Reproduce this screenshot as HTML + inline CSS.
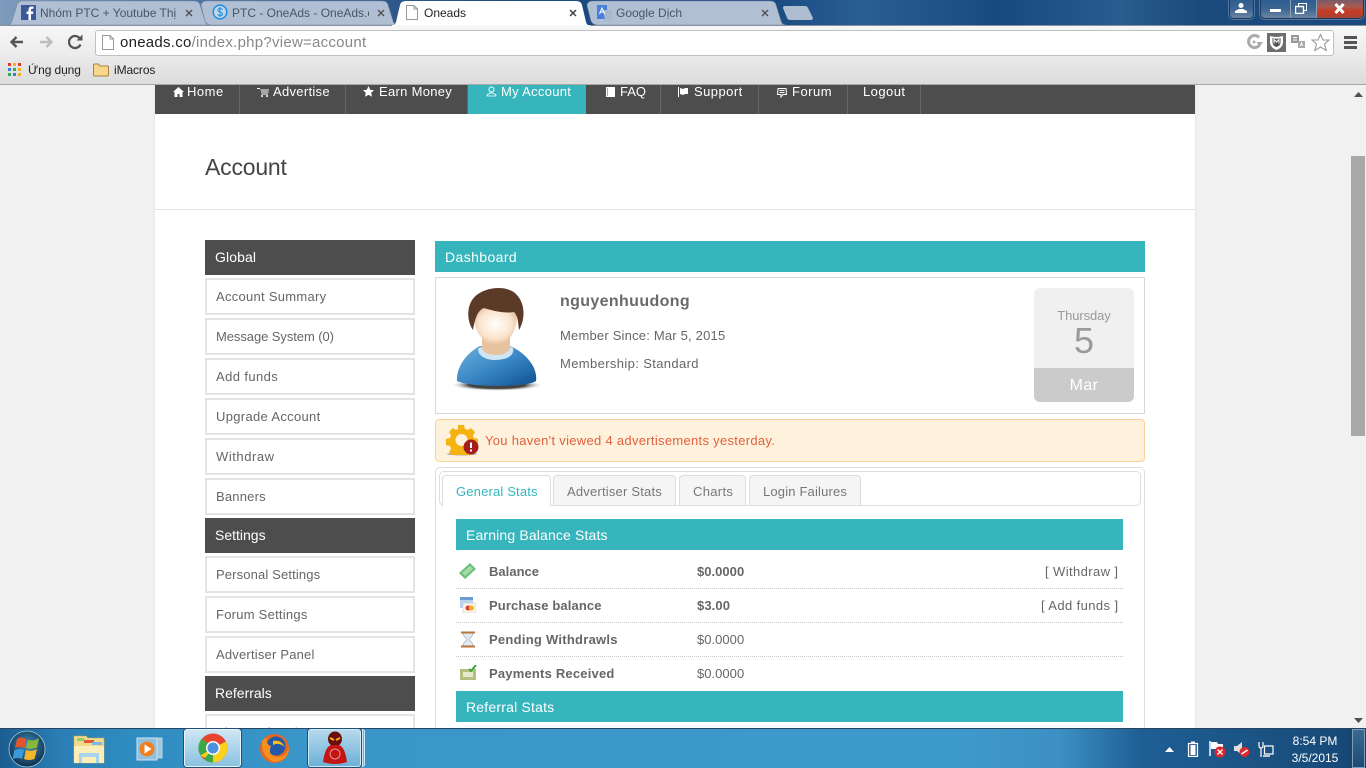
<!DOCTYPE html>
<html><head><meta charset="utf-8"><title>Oneads</title>
<style>
html,body{margin:0;padding:0;width:1366px;height:768px;overflow:hidden;background:#f1f1f1;font-family:"Liberation Sans",sans-serif}
div,span,svg{position:absolute}
.t{white-space:nowrap;line-height:18px;font-size:13px;color:#666;letter-spacing:.32px}
.b{font-weight:bold}
.w{color:#fff}
.h14{font-size:14px;line-height:16px;letter-spacing:.2px}
.nav{top:84px;font-size:13px;line-height:16px;color:#fff;letter-spacing:.3px}
.sep{top:85px;width:1px;height:29px;background:#666}
.sh{left:205px;width:210px;height:35px;background:#4d4d4d}
.si{left:205px;width:206px;height:33px;border:2px solid #e4e4e4;background:#fff}
.dot{left:456px;width:667px;height:0;border-top:1px dotted #ccc}
.tabb{top:475px;height:31px;background:#f5f5f5;border:1px solid #ddd;border-bottom:none;border-radius:4px 4px 0 0;box-sizing:border-box}
.ct{white-space:nowrap;font-size:12px;line-height:14px;color:#444;letter-spacing:0}
</style></head><body>
<!-- page -->
<div style="left:155px;top:85px;width:1040px;height:643px;background:#fff;box-shadow:0 0 3px #ddd"></div>
<div style="left:155px;top:85px;width:1040px;height:29px;background:#4d4d4d"></div>
<div style="left:468px;top:85px;width:118px;height:29px;background:#36b5bd"></div>
<div class="sep" style="left:239px"></div><div class="sep" style="left:345px"></div><div class="sep" style="left:467px"></div><div class="sep" style="left:660px"></div><div class="sep" style="left:758px"></div><div class="sep" style="left:847px"></div><div class="sep" style="left:920px"></div>
<svg style="left:173px;top:87px" width="11" height="10" viewBox="0 0 11 10"><path d="M5.500 0L11 5H9.500V10H6.500V7H4.500V10H1.500V5H0Z" fill="#fff"/></svg>
<div class="t nav" style="left:187px;letter-spacing:.5px">Home</div>
<svg style="left:257px;top:88px" width="12" height="9" viewBox="0 0 12 9"><path d="M0 .5H3M3.500 2H12M4 4H11.500M4.500 6H11" stroke="#fff" fill="none"/><circle cx="5" cy="8" r="1" fill="#fff"/><circle cx="10" cy="8" r="1" fill="#fff"/></svg>
<div class="t nav" style="left:273px">Advertise</div>
<svg style="left:363px;top:86px" width="11" height="11" viewBox="0 0 11 11"><path d="M5.500 0L7.200 3.700L11 4.200L8.200 6.800L9 10.700L5.500 8.700L2 10.700L2.800 6.800L0 4.200L3.800 3.700Z" fill="#fff"/></svg>
<div class="t nav" style="left:379px">Earn Money</div>
<svg style="left:486px;top:86px" width="11" height="11" viewBox="0 0 11 11"><circle cx="5.500" cy="3.500" r="2.500" stroke="#fff" fill="none"/><path d="M1 10H10V9L7 7H4L1 9Z" stroke="#fff" stroke-width=".8" fill="none"/></svg>
<div class="t nav" style="left:501px">My Account</div>
<svg style="left:606px;top:87px" width="9" height="10" viewBox="0 0 9 10"><path d="M0 0H9V10H0Z" fill="#fff"/><path d="M1 2H2M1 4H2M1 6H2M1 8H2" stroke="#4d4d4d"/></svg>
<div class="t nav" style="left:620px;letter-spacing:0">FAQ</div>
<svg style="left:678px;top:87px" width="10" height="10" viewBox="0 0 10 10"><path d="M.5 0V10" stroke="#fff"/><path d="M2 1L5 2L7 1H10V7H7L5 8L2 7Z" fill="#fff"/></svg>
<div class="t nav" style="left:694px;letter-spacing:.45px">Support</div>
<svg style="left:777px;top:88px" width="10" height="10" viewBox="0 0 10 10"><path d="M1 .5H9L9.500 6.500H6L4 9V6.500H.5Z" stroke="#fff" fill="none"/><path d="M2.500 2.500H7.500M2.500 4.500H7.500" stroke="#fff"/></svg>
<div class="t nav" style="left:792px;letter-spacing:.5px">Forum</div>
<div class="t nav" style="left:863px;letter-spacing:.45px">Logout</div>

<div class="t" style="left:205px;top:153px;font-size:23px;line-height:28px;color:#444;letter-spacing:-.2px">Account</div>
<div style="left:155px;top:209px;width:1040px;height:1px;background:#e2e2e2"></div>

<!-- sidebar -->
<div class="sh" style="top:240px"></div><div class="t w h14" style="left:215px;top:249px;letter-spacing:.1px">Global</div>
<div class="si" style="top:278px"></div><div class="t" style="left:216px;top:288px;letter-spacing:.28px">Account Summary</div>
<div class="si" style="top:318px"></div><div class="t" style="left:216px;top:328px;letter-spacing:-.07px">Message System (0)</div>
<div class="si" style="top:358px"></div><div class="t" style="left:216px;top:368px;letter-spacing:.4px">Add funds</div>
<div class="si" style="top:398px"></div><div class="t" style="left:216px;top:408px">Upgrade Account</div>
<div class="si" style="top:438px"></div><div class="t" style="left:216px;top:448px;letter-spacing:.55px">Withdraw</div>
<div class="si" style="top:478px"></div><div class="t" style="left:216px;top:488px;letter-spacing:.2px">Banners</div>
<div class="sh" style="top:518px"></div><div class="t w h14" style="left:215px;top:527px;letter-spacing:0">Settings</div>
<div class="si" style="top:556px"></div><div class="t" style="left:216px;top:566px;letter-spacing:.14px">Personal Settings</div>
<div class="si" style="top:596px"></div><div class="t" style="left:216px;top:606px;letter-spacing:.25px">Forum Settings</div>
<div class="si" style="top:636px"></div><div class="t" style="left:216px;top:646px;letter-spacing:.2px">Advertiser Panel</div>
<div class="sh" style="top:676px"></div><div class="t w h14" style="left:215px;top:685px;letter-spacing:0">Referrals</div>
<div class="si" style="top:714px"></div><div class="t" style="left:216px;top:724px;color:#888">View Referrals</div>

<!-- dashboard -->
<div style="left:435px;top:241px;width:710px;height:31px;background:#36b5bd"></div>
<div class="t w h14" style="left:445px;top:249px;letter-spacing:.4px">Dashboard</div>
<div style="left:435px;top:277px;width:708px;height:135px;border:1px solid #d8d8d8;background:#fff"></div>

<svg style="left:450px;top:286px" width="96" height="106" viewBox="0 0 96 106">
<defs>
<radialGradient id="sk" cx=".5" cy=".45" r=".65"><stop offset="0" stop-color="#fff"/><stop offset=".6" stop-color="#fbe3cc"/><stop offset="1" stop-color="#d9a77e"/></radialGradient>
<linearGradient id="bl" x1="0" x2="1" y1="0" y2="1"><stop offset="0" stop-color="#6cb0de"/><stop offset=".5" stop-color="#3a87c5"/><stop offset="1" stop-color="#0d508f"/></linearGradient>
<radialGradient id="sh"><stop offset=".6" stop-color="#444"/><stop offset="1" stop-color="#fff" stop-opacity="0"/></radialGradient>
</defs>
<ellipse cx="47" cy="99" rx="47" ry="6" fill="url(#sh)"/>
<path d="M7 95C6 80 18 66 30 60H60C74 66 88 80 86 95C78 101 22 102 7 95Z" fill="url(#bl)"/>
<path d="M28 63C33 58 58 58 63 62C65 70 56 74 45 74C36 74 28 70 28 63Z" fill="#cfe6f5"/>
<path d="M32 50H60V63C56 71 36 71 32 63Z" fill="#e8c3a0"/>
<path d="M24 30C24 24 30 20 40 22C50 24 60 26 66 24C68 35 66 45 58 54C54 59 50 59 46 59C41 59 36 57 32 52C27 46 24 40 24 30Z" fill="url(#sk)"/>
<path d="M23 44C16 34 16 16 28 8C40 0 58 0 66 8C76 18 75 34 69 44C68 36 68 30 64 26C54 28 40 24 34 22C28 24 25 32 23 44Z" fill="#5b3a28"/>
</svg>

<div class="t b" style="left:560px;top:292px;font-size:16px;line-height:20px;color:#6a6a6a;letter-spacing:.36px">nguyenhuudong</div>
<div class="t" style="left:560px;top:327px;letter-spacing:.2px">Member Since: Mar 5, 2015</div>
<div class="t" style="left:560px;top:355px;letter-spacing:.37px">Membership: Standard</div>

<div style="left:1034px;top:288px;width:100px;height:114px;background:#f0f0f0;border-radius:6px;overflow:hidden"><div style="left:0;top:80px;width:100px;height:34px;background:#cbcbcb"></div></div>
<div class="t" style="left:1034px;width:100px;text-align:center;top:307px;color:#9a9a9a;letter-spacing:-.1px">Thursday</div>
<div class="t" style="left:1034px;width:100px;text-align:center;top:320px;height:42px;font-size:36px;line-height:42px;color:#9a9a9a;letter-spacing:0">5</div>
<div class="t w" style="left:1034px;width:100px;text-align:center;top:377px;font-size:16px;letter-spacing:.4px">Mar</div>

<!-- alert -->
<div style="left:435px;top:419px;width:708px;height:41px;background:#fff2dc;border:1px solid #fad497;border-radius:4px"></div>
<svg style="left:446px;top:425px" width="34" height="32" viewBox="0 0 34 32">
<ellipse cx="16" cy="29" rx="15" ry="1.500" fill="#aaa"/>
<path d="M12 0H18L19 4L22 5L25 3L29 7L27 10.500L28 13L32 14V20L28 21L27 24L29 27L25 30H6L3 27L5 24L4 21L0 20V14L4 13L5 10.500L3 7L7 3L10 5L12 4Z" fill="#f5b311"/>
<circle cx="15.500" cy="15" r="6" fill="#fff2dc"/>
<circle cx="25" cy="22" r="7.500" fill="#a51d1d"/>
<path d="M25 17.500V23M25 24.500V26.500" stroke="#fff" stroke-width="2"/>
</svg>
<div class="t" style="left:485px;top:432px;color:#e2603f;letter-spacing:.3px">You haven't viewed 4 advertisements yesterday.</div>

<!-- tabs panel -->
<div style="left:435px;top:467px;width:708px;height:270px;border:1px solid #ddd;border-radius:5px 5px 0 0;background:#fff"></div>
<div style="left:439px;top:471px;width:700px;height:33px;border:1px solid #ddd;border-radius:5px;background:#fff"></div>
<div class="tabb" style="left:442px;width:109px;background:#fff"></div>
<div class="tabb" style="left:553px;width:123px;height:30px"></div>
<div class="tabb" style="left:679px;width:67px;height:30px"></div>
<div class="tabb" style="left:749px;width:112px;height:30px"></div>
<div class="t" style="left:456px;top:483px;color:#36b5bd;letter-spacing:.17px">General Stats</div>
<div class="t" style="left:567px;top:483px;color:#777;letter-spacing:.2px">Advertiser Stats</div>
<div class="t" style="left:693px;top:483px;color:#777">Charts</div>
<div class="t" style="left:763px;top:483px;color:#777;letter-spacing:.17px">Login Failures</div>

<div style="left:456px;top:519px;width:667px;height:31px;background:#36b5bd"></div>
<div class="t w h14" style="left:466px;top:527px;letter-spacing:.15px">Earning Balance Stats</div>

<svg style="left:459px;top:563px" width="17" height="16" viewBox="0 0 17 16"><path d="M0 10L11 0L17 6L6 16Z" fill="#6cc07a"/><path d="M3 10L11 3L14 6L6 13Z" fill="#a6dca8"/></svg>
<div class="t b" style="left:489px;top:563px;letter-spacing:.03px">Balance</div>
<div class="t b" style="left:697px;top:563px;letter-spacing:.03px">$0.0000</div>
<div class="t" style="left:1045px;top:563px;letter-spacing:.4px">[ Withdraw ]</div>
<div class="dot" style="top:588px"></div>

<svg style="left:460px;top:597px" width="16" height="16" viewBox="0 0 16 16"><path d="M0 0H13V11H0Z" fill="#b9d2ee"/><path d="M0 0H13V3H0Z" fill="#6c9ad2"/><path d="M3 6H16V16H3Z" fill="#fbf3e2" stroke="#ccc" stroke-width=".5"/><circle cx="8" cy="11" r="2.500" fill="#e53a3a"/><circle cx="11.500" cy="11" r="2.500" fill="#f4b32a"/></svg>
<div class="t b" style="left:489px;top:597px;letter-spacing:.13px">Purchase balance</div>
<div class="t b" style="left:697px;top:597px;letter-spacing:.1px">$3.00</div>
<div class="t" style="left:1041px;top:597px;letter-spacing:.4px">[ Add funds ]</div>
<div class="dot" style="top:622px"></div>

<svg style="left:460px;top:631px" width="16" height="17" viewBox="0 0 16 17"><path d="M3 2H13C13 7 9 7 9 8.500C9 10 13 10 13 15H3C3 10 7 10 7 8.500C7 7 3 7 3 2Z" fill="#dfe9f3" stroke="#9aa7b5" stroke-width=".6"/><path d="M1 .5H15V2.500H1ZM1 14.500H15V16.500H1Z" fill="#b5763a"/></svg>
<div class="t b" style="left:489px;top:631px;letter-spacing:.26px">Pending Withdrawls</div>
<div class="t" style="left:697px;top:631px;letter-spacing:.03px">$0.0000</div>
<div class="dot" style="top:656px"></div>

<svg style="left:460px;top:665px" width="17" height="16" viewBox="0 0 17 16"><path d="M0 4H16V15H0Z" fill="#b5bd7f"/><path d="M3 7H13V12H3Z" fill="#e6e9cd"/><path d="M9 4L11 6L16 0" stroke="#3fa63f" stroke-width="2" fill="none"/></svg>
<div class="t b" style="left:489px;top:665px;letter-spacing:.2px">Payments Received</div>
<div class="t" style="left:697px;top:665px;letter-spacing:.03px">$0.0000</div>

<div style="left:456px;top:691px;width:667px;height:31px;background:#36b5bd"></div>
<div class="t w h14" style="left:466px;top:699px">Referral Stats</div>

<!-- scrollbar -->
<div style="left:1351px;top:85px;width:15px;height:643px;background:#f1f1f1"></div>
<div style="left:1351px;top:156px;width:14px;height:280px;background:#a8a8a8"></div>
<svg style="left:1354px;top:92px" width="9" height="5"><path d="M0 5L4.500 0L9 5Z" fill="#505050"/></svg>
<svg style="left:1354px;top:718px" width="9" height="5"><path d="M0 0L4.500 5L9 0Z" fill="#505050"/></svg>

<!-- chrome tab strip -->
<div style="left:0;top:0;width:1366px;height:25px;background:linear-gradient(90deg,#7f9bbd 0,#5a7ea8 120px,#1d4a80 500px,#17487e 760px,#2a5f94 860px,#184a80 1000px,#2a5c90 1120px,#1a4a7e 1200px,#1a4a7e 1366px)"></div>
<svg style="left:0;top:0" width="830" height="26" viewBox="0 0 830 26">
<path d="M6 25Q11 25 12 21L17 5Q18 1 23 1H194Q199 1 200 5L205 21Q206 25 210 25Z" fill="#b0bfd3" stroke="#7a8ca5" stroke-width=".6"/>
<path d="M201 5Q202 1 207 1H382Q387 1 388 5L393 21Q394 25 398 25H212Q207 25 205 21Z" fill="#b0bfd3" stroke="#7a8ca5" stroke-width=".6"/>
<path d="M587 5Q588 1 593 1H770Q775 1 776 5L781 21Q782 25 786 25H598Q593 25 591 21Z" fill="#b0bfd3" stroke="#7a8ca5" stroke-width=".6"/>
<path d="M390 26Q395 26 396 22L400 5Q401 1 406 1H576Q581 1 582 5L586 22Q587 26 592 26Z" fill="#fff"/>
<path d="M785 6H805Q807 6 808 8L813 18Q813 20 811 20H790Q788 20 787 18L783 8Q783 6 785 6Z" fill="#aebdd0"/>
</svg>
<div style="left:0;top:25px;width:1366px;height:34px;background:linear-gradient(#f7f7f7,#eaeaea)"></div>
<div style="left:0;top:25px;width:392px;height:1px;background:#86919e"></div>
<div style="left:590px;top:25px;width:776px;height:1px;background:#86919e"></div>
<div style="left:0;top:58px;width:1366px;height:26px;background:linear-gradient(#e9e9e9,#dcdcdc)"></div>
<div style="left:0;top:84px;width:1366px;height:1px;background:#a8a8a8"></div>

<svg style="left:21px;top:5px" width="15" height="15" viewBox="0 0 15 15"><rect width="15" height="15" fill="#3b5998"/><path d="M10 15V9H12L12.400 6.500H10V5C10 4 10.500 3.700 11.300 3.700H12.500V1.500H10.500C8.500 1.500 7.500 2.800 7.500 4.700V6.500H5.500V9H7.500V15Z" fill="#fff"/></svg>
<div class="ct" style="left:40px;top:6px;width:137px;overflow:hidden;color:#4b5665">Nhóm PTC + Youtube Thị</div>
<svg style="left:212px;top:4px" width="16" height="16" viewBox="0 0 16 16"><circle cx="8" cy="8" r="6.800" stroke="#2694e0" stroke-width="1.600" fill="#c4d5e6"/><path d="M10.500 5.500C9 4 5.500 4.500 6 6.500C6.500 8.500 10.500 7.500 10.500 10C10.500 12 7 12 5.500 10.500M8 3V13" stroke="#2694e0" stroke-width="1.100" fill="none"/></svg>
<div class="ct" style="left:232px;top:6px;width:137px;overflow:hidden;color:#4b5665">PTC - OneAds - OneAds.c</div>
<svg style="left:406px;top:5px" width="12" height="15" viewBox="0 0 12 15"><path d="M.5.500H8L11.500 4V14.500H.5Z" fill="#fff" stroke="#999"/><path d="M8 .5V4H11.500" stroke="#999" fill="none"/></svg>
<div class="ct" style="left:424px;top:6px;color:#222">Oneads</div>
<svg style="left:597px;top:5px" width="15" height="15" viewBox="0 0 15 15"><path d="M0 0H10V14H0Z" fill="#4a80dc"/><path d="M6 5H15V15H8Z" fill="#a8b8cc"/><path d="M2.500 9L5 3L7.500 9M3.500 7H6.500" stroke="#fff" fill="none"/></svg>
<div class="ct" style="left:616px;top:6px;color:#4b5665">Google Dịch</div>
<svg style="left:185px;top:9px" width="8" height="8"><path d="M1 1L7 7M7 1L1 7" stroke="#555" stroke-width="1.500"/></svg>
<svg style="left:377px;top:9px" width="8" height="8"><path d="M1 1L7 7M7 1L1 7" stroke="#555" stroke-width="1.500"/></svg>
<svg style="left:569px;top:9px" width="8" height="8"><path d="M1 1L7 7M7 1L1 7" stroke="#444" stroke-width="1.500"/></svg>
<svg style="left:761px;top:9px" width="8" height="8"><path d="M1 1L7 7M7 1L1 7" stroke="#555" stroke-width="1.500"/></svg>

<!-- window controls -->
<div style="left:1229px;top:-2px;width:23px;height:19px;border:1px solid #1d3a5c;border-radius:0 0 5px 5px;background:linear-gradient(#2c5c8f,#3c6591 50%,#6b86a3);box-shadow:0 0 0 1px rgba(255,255,255,.25)"></div>
<svg style="left:1235px;top:3px" width="12" height="10" viewBox="0 0 12 10"><circle cx="6" cy="2.500" r="2.500" fill="#fff"/><path d="M0 10V8L4 6H8L12 8V10Z" fill="#fff"/></svg>
<div style="left:1260px;top:-2px;width:102px;height:19px;border:1px solid #1d3a5c;border-radius:0 0 5px 5px;box-shadow:0 0 0 1px rgba(255,255,255,.25);overflow:hidden;background:linear-gradient(#2c5c8f,#3c6591 50%,#6b86a3)"><div style="left:29px;top:0;width:1px;height:19px;background:#8aa0b8"></div><div style="left:55px;top:0;width:1px;height:19px;background:#8aa0b8"></div><div style="left:56px;top:0;width:46px;height:19px;background:linear-gradient(#6f5a6e 0,#a85a50 40%,#c73a22 65%,#a54436 100%)"></div></div>
<div style="left:1270px;top:9px;width:11px;height:3px;background:#fff"></div>
<svg style="left:1295px;top:3px" width="12" height="11" viewBox="0 0 12 11"><path d="M3.500.5H11.500V7.500H3.500Z" fill="none" stroke="#fff"/><path d="M.5 3.500H8.500V10.500H.5Z" fill="#4a6a8e" stroke="#fff" stroke-width="1.400"/></svg>
<svg style="left:1334px;top:3px" width="11" height="11" viewBox="0 0 11 11"><path d="M1.500 1L9.500 10M9.500 1L1.500 10" stroke="#fff" stroke-width="3"/></svg>

<!-- toolbar -->
<svg style="left:9px;top:35px" width="15" height="14" viewBox="0 0 15 14"><path d="M14 7H3M7.500 2L2.500 7L7.500 12" stroke="#555" stroke-width="2.400" fill="none"/></svg>
<svg style="left:39px;top:35px" width="15" height="14" viewBox="0 0 15 14"><path d="M1 7H12M7.500 2L12.500 7L7.500 12" stroke="#bdbdbd" stroke-width="2.400" fill="none"/></svg>
<svg style="left:68px;top:34px" width="15" height="16" viewBox="0 0 15 16"><path d="M12.500 10.500A6 6 0 1 1 11.500 4" stroke="#555" stroke-width="2.300" fill="none"/><path d="M8.500 6.500H14.500V.5Z" fill="#555"/></svg>
<div style="left:95px;top:30px;width:1237px;height:24px;background:#fff;border:1px solid #c0c0c0;border-radius:3px"></div>
<svg style="left:102px;top:35px" width="12" height="15" viewBox="0 0 12 15"><path d="M.5.500H8L11.500 4V14.500H.5Z" fill="#fff" stroke="#999"/><path d="M8 .5V4H11.500" stroke="#999" fill="none"/></svg>
<div class="t" style="left:120px;top:34px;font-size:15px;color:#222;letter-spacing:.26px">oneads.co<span style="position:static;color:#888">/index.php?view=account</span></div>
<svg style="left:1246px;top:34px" width="17" height="16" viewBox="0 0 17 16"><path d="M13 3.500A6 6 0 1 0 13.500 11" stroke="#aaa" stroke-width="3" fill="none"/><circle cx="8" cy="8" r="1.500" fill="#aaa"/><path d="M10.500 8H17L13.700 12.500Z" fill="#aaa"/></svg>
<svg style="left:1267px;top:33px" width="19" height="19" viewBox="0 0 19 19"><rect width="19" height="19" fill="#6e6e6e"/><path d="M3 3Q9.500 5 16 3V10Q15 15 9.500 17Q4 15 3 10Z" fill="#fff"/><path d="M5.500 5Q9.500 6.500 13.500 5V10Q13 13 9.500 14Q6 13 5.500 10Z" fill="#555"/><path d="M7 10.500V6.500L9.500 9L12 6.500V10.500" stroke="#fff" fill="none"/></svg>
<svg style="left:1291px;top:35px" width="15" height="15" viewBox="0 0 15 15"><rect width="8" height="8" fill="#999"/><rect x="7" y="6" width="7" height="7" fill="#aaa"/><path d="M2 2.500H6M2 5H6" stroke="#fff"/><path d="M9.500 11L10.500 8L11.500 11" stroke="#fff" fill="none"/></svg>
<svg style="left:1311px;top:33px" width="19" height="19" viewBox="0 0 19 19"><path d="M9.500 1.500L12 7H18L13.500 11L15.200 17.500L9.500 14L3.800 17.500L5.500 11L1 7H7Z" fill="#fff" stroke="#999" stroke-width="1.100"/></svg>
<div style="left:1344px;top:36px;width:13px;height:3px;background:#555"></div><div style="left:1344px;top:41px;width:13px;height:3px;background:#555"></div><div style="left:1344px;top:46px;width:13px;height:3px;background:#555"></div>

<!-- bookmarks -->
<svg style="left:8px;top:63px" width="13" height="13" viewBox="0 0 13 13"><rect width="3" height="3" fill="#e03a2c"/><rect x="5" width="3" height="3" fill="#f0b020"/><rect x="10" width="3" height="3" fill="#e03a2c"/><rect y="5" width="3" height="3" fill="#3a7de0"/><rect x="5" y="5" width="3" height="3" fill="#34a853"/><rect x="10" y="5" width="3" height="3" fill="#f0b020"/><rect y="10" width="3" height="3" fill="#34a853"/><rect x="5" y="10" width="3" height="3" fill="#3a7de0"/><rect x="10" y="10" width="3" height="3" fill="#f0b020"/></svg>
<div class="ct" style="left:28px;top:63px;color:#222;letter-spacing:-.1px">Ứng dụng</div>
<svg style="left:93px;top:63px" width="16" height="14" viewBox="0 0 16 14"><path d="M.5 2Q.5 1 1.500 1H5.500L7 3H14.500Q15.500 3 15.500 4V12Q15.500 13 14.500 13H1.500Q.5 13 .5 12Z" fill="#f7d68e" stroke="#a8823c"/></svg>
<div class="ct" style="left:114px;top:63px;color:#222;letter-spacing:-.1px">iMacros</div>

<!-- taskbar -->
<div style="left:0;top:728px;width:1366px;height:40px;background:linear-gradient(90deg,#1b5d90 0,#2a7fb5 60px,#2f8cc0 130px,#3a96c8 300px,#3e9acc 950px,#3d8fc4 1060px,#1f5f94 1140px,#174a78 1340px,#153f6b 1366px);border-top:1px solid #27435f;box-sizing:border-box"></div>
<div style="left:184px;top:729px;width:57px;height:38px;background:linear-gradient(#cfe6f3,#8ac2e0);border:1px solid #e8f4fa;border-radius:3px;box-sizing:border-box;box-shadow:0 0 0 1px #1f4f74"></div>
<div style="left:308px;top:729px;width:53px;height:38px;background:linear-gradient(#b5d9ec,#6cb1d7);border:1px solid #d0e8f4;border-radius:3px;box-sizing:border-box;box-shadow:0 0 0 1px #1f4f74"></div>
<div style="left:362px;top:729px;width:3px;height:38px;background:#6cb1d7;border:1px solid #d0e8f4;border-radius:0 3px 3px 0;box-sizing:border-box"></div>

<svg style="left:8px;top:730px" width="38" height="38" viewBox="0 0 38 38">
<defs><radialGradient id="orb" cx=".5" cy=".4" r=".6"><stop offset="0" stop-color="#3f8fc0"/><stop offset="1" stop-color="#0d2f4a"/></radialGradient></defs>
<circle cx="19" cy="19" r="18" fill="url(#orb)" stroke="#a9cde0" stroke-width=".8"/>
<path d="M9 9Q13 6 18.500 9L16.500 18Q12 16 7 18Z" fill="#e2552d"/><path d="M20 9.500Q25 12 31 8L29 17.500Q23 20 18 18Z" fill="#86b83a"/><path d="M6.500 20Q12 18 16 20L14 29Q10 27 4.500 29Z" fill="#3a9bdc"/><path d="M18 20Q23 22 29 19L26.500 29Q21 31 16 29Z" fill="#f5b72a"/>
</svg>
<svg style="left:72px;top:733px" width="34" height="32" viewBox="0 0 34 32"><path d="M2 3H14L16 5H32V30H2Z" fill="#f3d98b" stroke="#c7a95c" stroke-width=".6"/><path d="M5 5H12V8H5Z" fill="#8ccf6c"/><path d="M12 7H22V10H12Z" fill="#e05a3a"/><path d="M20 9H30V12H20Z" fill="#7ab8e8"/><path d="M2 13H32V30H2Z" fill="#fbeeb8"/><path d="M7 20H27V30H24V24H10V30H7Z" fill="#a5d4ec"/></svg>
<svg style="left:136px;top:737px" width="28" height="26" viewBox="0 0 28 26"><path d="M9 1H26V21H9Z" fill="#9fc7de" stroke="#cfe3ef" stroke-width=".8"/><path d="M1 1H21V23H1Z" fill="#8fc1de" stroke="#cfe3ef"/><circle cx="11" cy="12" r="7.500" fill="#f07f1f"/><path d="M8.500 7.500L15.500 12L8.500 16.500Z" fill="#fff"/></svg>
<svg style="left:198px;top:733px" width="30" height="30" viewBox="0 0 30 30"><circle cx="15" cy="15" r="14.500" fill="#e8442e"/><path d="M15 15L2.500 22.500A14.500 14.500 0 0 1 4 5.500Z" fill="#3ca84a"/><path d="M15 15L27.900 8.500A14.500 14.500 0 0 1 15 29.500L2.500 22.500Z" fill="#fbd11e"/><path d="M15 15L15 29.500A14.500 14.500 0 0 1 6 26.300Z" fill="#3ca84a"/><circle cx="15" cy="15" r="7" fill="#fff"/><circle cx="15" cy="15" r="5.500" fill="#4c8ee0"/></svg>
<svg style="left:259px;top:733px" width="31" height="31" viewBox="0 0 31 31"><circle cx="15.500" cy="15.500" r="14.500" fill="#e8661e"/><circle cx="17" cy="13" r="9.500" fill="#2458a8"/><path d="M3 8Q2 24 15 29Q30 28 30 13Q28 24 18 24Q8 22 12 13Q7 12 8 5Q4 6 3 8Z" fill="#f5901e"/><path d="M14 8Q22 6 26 14Q20 9 14 12Z" fill="#f5c21e"/></svg>
<svg style="left:322px;top:731px" width="26" height="34" viewBox="0 0 26 34"><ellipse cx="13" cy="8" rx="7" ry="7.500" fill="#6b0d0d"/><path d="M8 7L12 9M18 7L14 9" stroke="#f5b01e" stroke-width="2"/><path d="M1 31Q3 16 9 14H17Q23 16 25 31Q13 35 1 31Z" fill="#c41515"/><circle cx="13" cy="23" r="5" fill="none" stroke="#f09090"/></svg>

<svg style="left:1165px;top:747px" width="9" height="5"><path d="M0 5L4.500 0L9 5Z" fill="#fff"/></svg>
<svg style="left:1187px;top:741px" width="12" height="16" viewBox="0 0 12 16"><path d="M1.500 2.500H10.500V15.500H1.500Z" fill="#2a5a86" stroke="#fff" stroke-width="1.200"/><rect x="3.500" y="4" width="5" height="10" fill="#fff"/><rect x="4" y="0.500" width="4" height="2" fill="#fff"/></svg>
<svg style="left:1209px;top:741px" width="18" height="17" viewBox="0 0 18 17"><path d="M1 0V15" stroke="#fff" stroke-width="1.500"/><path d="M2 1H8L9 3H14V8H2Z" fill="#fff"/><circle cx="11" cy="11" r="5.500" fill="#e0262c"/><path d="M8.500 8.500L13.500 13.500M13.500 8.500L8.500 13.500" stroke="#fff" stroke-width="1.300"/></svg>
<svg style="left:1233px;top:741px" width="18" height="17" viewBox="0 0 18 17"><path d="M1 5H4L9 1V14L4 10H1Z" fill="#ddd"/><circle cx="11.500" cy="11" r="5" fill="#e0262c"/><path d="M8.500 13L14.500 9" stroke="#fff" stroke-width="1.600"/></svg>
<svg style="left:1258px;top:741px" width="16" height="17" viewBox="0 0 16 17"><path d="M6.500 5H15V13H6.500Z" fill="none" stroke="#fff" stroke-width="1.200"/><path d="M5 15H12" stroke="#fff" stroke-width="1.400"/><path d="M1 1V5Q1 7 3 7Q5 7 5 5V1M3 7V16" stroke="#fff" stroke-width="1.200" fill="none"/></svg>
<div class="ct" style="left:1279px;width:72px;text-align:center;top:734px;color:#fff">8:54 PM</div>
<div class="ct" style="left:1279px;width:72px;text-align:center;top:751px;color:#fff">3/5/2015</div>
<div style="left:1352px;top:729px;width:13px;height:39px;border:1px solid #7d9cb8;box-sizing:border-box;background:linear-gradient(#3a6a94,#1c4a74)"></div>
</body></html>
